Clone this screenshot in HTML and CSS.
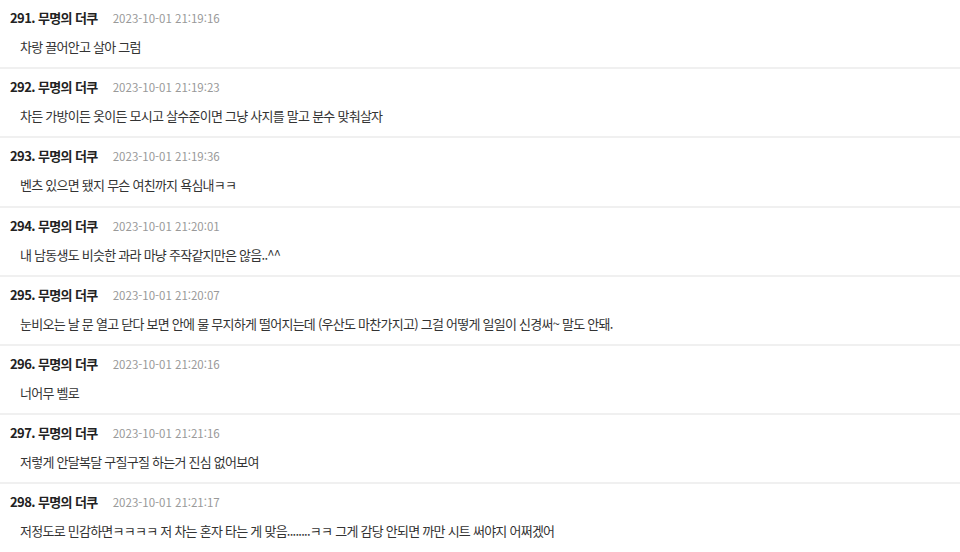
FILE: index.html
```html
<!DOCTYPE html>
<html lang="ko">
<head>
<meta charset="utf-8">
<link rel="stylesheet" href="styles.css">
</head>
<body>
<ul class="list">
  <li class="item"><div class="head"><span class="name">291. 무명의 더쿠</span><span class="date">2023-10-01 21:19:16</span></div><p class="body">차랑 끌어안고 살아 그럼</p></li>
  <li class="item"><div class="head"><span class="name">292. 무명의 더쿠</span><span class="date">2023-10-01 21:19:23</span></div><p class="body">차든 가방이든 옷이든 모시고 살수준이면 그냥 사지를 말고 분수 맞춰살자</p></li>
  <li class="item"><div class="head"><span class="name">293. 무명의 더쿠</span><span class="date">2023-10-01 21:19:36</span></div><p class="body">벤츠 있으면 됐지 무슨 여친까지 욕심내ㅋㅋ</p></li>
  <li class="item"><div class="head"><span class="name">294. 무명의 더쿠</span><span class="date">2023-10-01 21:20:01</span></div><p class="body">내 남동생도 비슷한 과라 마냥 주작같지만은 않음..^^</p></li>
  <li class="item"><div class="head"><span class="name">295. 무명의 더쿠</span><span class="date">2023-10-01 21:20:07</span></div><p class="body">눈비오는 날 문 열고 닫다 보면 안에 물 무지하게 떨어지는데 (우산도 마찬가지고) 그걸 어떻게 일일이 신경써~ 말도 안돼.</p></li>
  <li class="item"><div class="head"><span class="name">296. 무명의 더쿠</span><span class="date">2023-10-01 21:20:16</span></div><p class="body">너어무 벨로</p></li>
  <li class="item"><div class="head"><span class="name">297. 무명의 더쿠</span><span class="date">2023-10-01 21:21:16</span></div><p class="body">저렇게 안달복달 구질구질 하는거 진심 없어보여</p></li>
  <li class="item"><div class="head"><span class="name">298. 무명의 더쿠</span><span class="date">2023-10-01 21:21:17</span></div><p class="body">저정도로 민감하면ㅋㅋㅋㅋ 저 차는 혼자 타는 게 맞음........ㅋㅋ 그게 감당 안되면 까만 시트 써야지 어쩌겠어</p></li>
</ul>
</body>
</html>
```
FILE: styles.css
```css
html, body {
  margin: 0;
  padding: 0;
  background: #fff;
  overflow: hidden;
}
body {
  font-family: "Noto Sans CJK KR", "Noto Sans", sans-serif;
  color: #333;
}
.list {
  list-style: none;
  margin: 0;
  padding: 0;
}
.item {
  padding: 8px 0 10.2px 10px;
  border-bottom: 2px solid #f0f0f0;
}
.head {
  display: flex;
  align-items: baseline;
  gap: 15px;
  height: 20px;
  line-height: 20px;
}
.name {
  font-size: 13px;
  font-weight: 700;
  letter-spacing: -0.6px;
  color: #222;
}
.date {
  font-size: 11.5px;
  color: #999;
}
.body {
  margin: 9px 0 0 10px;
  font-size: 13px;
  letter-spacing: -0.75px;
  line-height: 20px;
  color: #333;
}
```
